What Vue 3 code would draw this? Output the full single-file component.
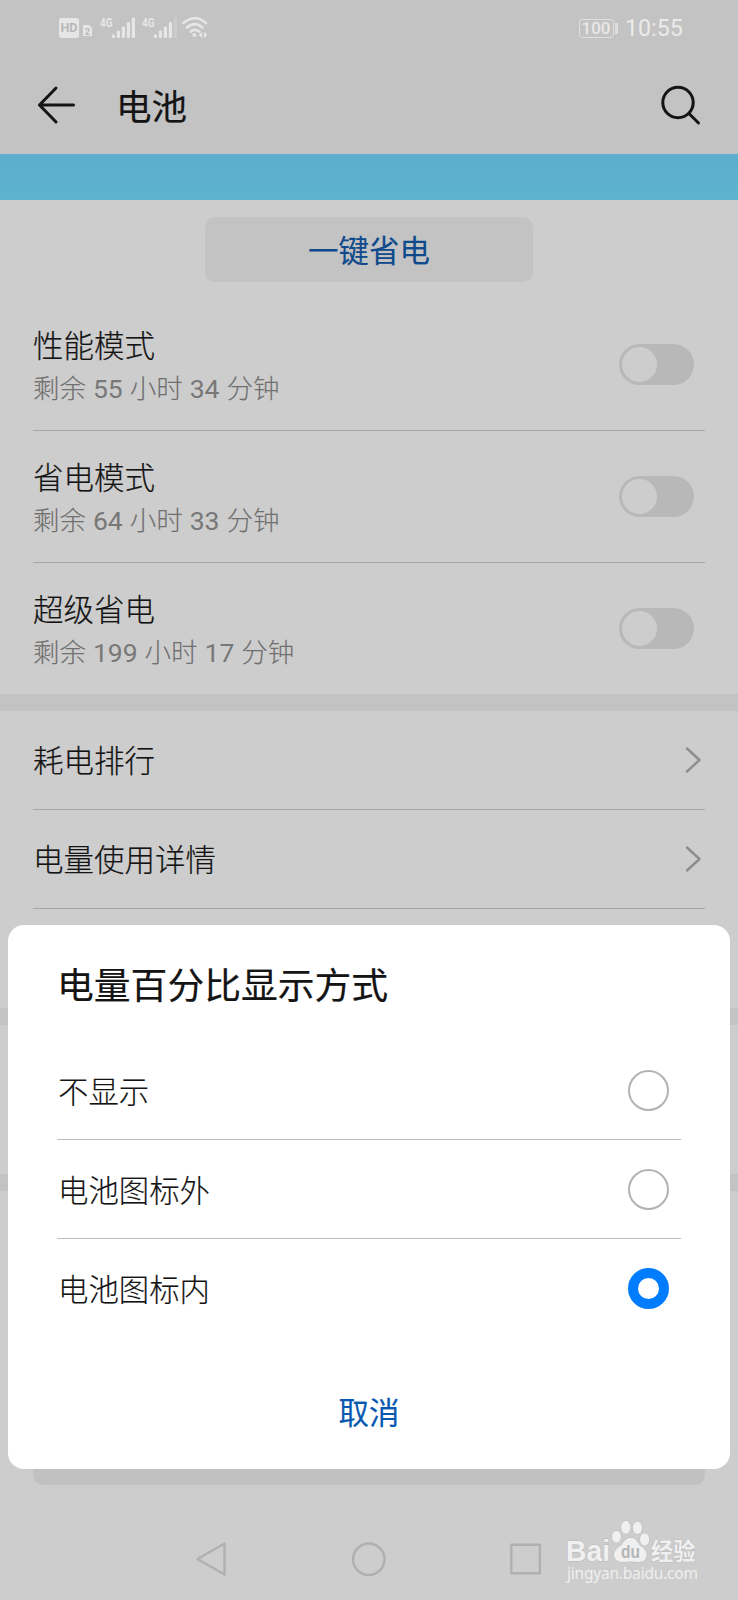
<template>
    <div class="screen">
        <header class="top">
            <div class="status">
                <svg class="status-icons" width="150" height="24" viewBox="0 0 150 24">
                    <rect x="0" y="2" width="20" height="20" rx="2.5" fill="#e6e6e6" />
                    <text x="1.5" y="16.3" textLength="17" lengthAdjust="spacingAndGlyphs" class="hd">HD</text>
                    <path d="M24 9h6l3 3v8h-9z" fill="#e6e6e6" />
                    <text x="28.5" y="18.5" text-anchor="middle" class="sim">2</text>
                    <g v-for="(net, i) in networks" :key="i" :transform="`translate(${net.x} 0)`">
                        <text x="0" y="10.6" textLength="12.5" lengthAdjust="spacingAndGlyphs" class="net">4G</text>
                        <rect v-for="(h, n) in bars" :key="n" :x="11.8 + n * 5" :y="22 - h" width="3.2" :height="h" rx="1.2"
                            fill="#e6e6e6" :opacity="n < net.level ? 1 : 0.25" />
                    </g>
                    <g fill="none" stroke="#e6e6e6" stroke-width="2.6" stroke-linecap="round">
                        <path d="M124.5 7Q136 -2.5 147 7" />
                        <path d="M128 11.6Q136 4.8 143.5 11.6" />
                        <path d="M131.6 15.6Q136 12.2 140.2 15.6" />
                    </g>
                    <circle cx="135.3" cy="19" r="2" fill="#e6e6e6" />
                    <path d="M143.2 16v6l-3.6-3zM145 16v6l3.6-3z" fill="#e6e6e6" />
                </svg>
                <div class="status-right">
                    <div class="battery">100</div>
                    <div class="battery-tip"></div>
                    <span class="clock">10:55</span>
                </div>
            </div>
            <div class="title-bar">
                <svg width="40" height="40" viewBox="0 0 40 40" class="line-icon">
                    <path d="M36.5 20H2.5M19 3L2.5 20L19 37" />
                </svg>
                <h1>电池</h1>
                <svg width="42" height="42" viewBox="0 0 42 42" class="line-icon">
                    <circle cx="19" cy="18.5" r="15.2" />
                    <path d="M30 29.5L39.5 39" />
                </svg>
            </div>
        </header>

        <div class="banner"></div>
        <div class="save-wrap">
            <button class="save-btn">一键省电</button>
        </div>

        <section>
            <div v-for="mode in modes" :key="mode.name" class="row mode">
                <div class="mode-text">
                    <div class="name">{{ mode.name }}</div>
                    <div class="left">剩余 <b>{{ mode.hours }}</b> 小时 <b>{{ mode.minutes }}</b> 分钟</div>
                </div>
                <div class="toggle"></div>
            </div>
        </section>
        <div class="gap"></div>
        <section>
            <div v-for="item in links" :key="item" class="row link">
                <span class="name">{{ item }}</span>
                <svg width="18" height="28" viewBox="0 0 18 28" class="chevron">
                    <path d="M3 2.5L15.5 14L3 25.5" />
                </svg>
            </div>
            <div class="link"></div>
        </section>
        <div class="gap"></div>
        <section class="block"></section>
        <div class="gap"></div>
        <section class="bottom">
            <div class="bottom-btn"></div>
        </section>

        <nav class="nav">
            <svg width="738" height="60" viewBox="0 0 738 60">
                <g fill="none" stroke="#b0b0b0" stroke-width="2.4" stroke-linejoin="round">
                    <path d="M224.5 13.5V44.5L197.5 29z" />
                    <circle cx="368.8" cy="29.2" r="15.7" />
                    <rect x="511.3" y="14.8" width="28.6" height="28.4" />
                </g>
            </svg>
        </nav>

        <div class="dialog">
            <h2>电量百分比显示方式</h2>
            <div v-for="(option, i) in options" :key="option" class="option" @click="selected = i">
                <span>{{ option }}</span>
                <i class="radio" :class="{ checked: selected === i }"></i>
            </div>
            <button class="cancel">取消</button>
        </div>

        <svg class="watermark" width="142" height="76" viewBox="0 0 142 76">
            <g class="mark">
                <text x="5" y="46" textLength="44" lengthAdjust="spacingAndGlyphs" class="bai">Bai</text>
                <ellipse cx="55.4" cy="21.7" rx="4.6" ry="6" />
                <ellipse cx="64.8" cy="12.3" rx="4.6" ry="6.5" />
                <ellipse cx="76.4" cy="12.8" rx="4.6" ry="6.2" />
                <ellipse cx="83.6" cy="24.5" rx="4.6" ry="6.2" />
                <path d="M69.5 22.7C64 22.7 63 28 58 32C53.5 35.5 51.5 39.5 54 43.5C57 48.5 64 46.5 69.5 46.5C75 46.5 82 49 85 43C87 38 84.5 34.5 80.5 31.5C76 28 75.5 22.7 69.5 22.7z" />
                <text x="90" y="44.6" textLength="44.5" lengthAdjust="spacingAndGlyphs" class="jy">经验</text>
            </g>
            <text x="60" y="43" textLength="19" lengthAdjust="spacingAndGlyphs" class="du">du</text>
            <text x="6" y="63.5" textLength="131" class="url">jingyan.baidu.com</text>
        </svg>
    </div>
</template>

<script setup>
import { ref } from 'vue'

const bars = [3.5, 7.5, 11.5, 16, 20.5]
const networks = [
    { x: 41, level: 5 },
    { x: 83, level: 4 }
]

const modes = [
    { name: '性能模式', hours: 55, minutes: 34 },
    { name: '省电模式', hours: 64, minutes: 33 },
    { name: '超级省电', hours: 199, minutes: 17 }
]

const links = ['耗电排行', '电量使用详情']

const options = ['不显示', '电池图标外', '电池图标内']
const selected = ref(2)
</script>

<style>
body {
    margin: 0;
}
</style>

<style scoped>
.screen {
    position: relative;
    width: 738px;
    height: 1600px;
    overflow: hidden;
    background: #cdcdcd;
    color: #141414;
    font-family: Roboto, "Noto Sans CJK SC", sans-serif;
}

.screen * {
    box-sizing: border-box;
}

h1,
h2 {
    margin: 0;
    font-weight: 400;
    -webkit-text-stroke: 0.2px currentColor;
}

button {
    border: none;
    padding: 0;
    font-family: inherit;
    -webkit-text-stroke: 0.15px currentColor;
}

.top {
    height: 154px;
    background: #c3c3c3;
}

.status {
    display: flex;
    justify-content: space-between;
    height: 56px;
    padding: 16px 56px 0 59px;
}

.status-right {
    display: flex;
    align-items: center;
    height: 24px;
}

.hd {
    font: bold 12.5px Roboto, sans-serif;
    fill: #b8b8b8;
}

.sim {
    font: bold 9.5px Roboto, sans-serif;
    fill: #b8b8b8;
}

.net {
    font: bold 12.5px Roboto, sans-serif;
    fill: #e6e6e6;
}

.battery {
    width: 35px;
    height: 19px;
    border: 1.5px solid #dedede;
    border-radius: 3px;
    color: #e8e8e8;
    font-size: 17px;
    font-weight: 500;
    line-height: 17px;
    text-align: center;
}

.battery-tip {
    width: 2.5px;
    height: 11px;
    margin: 0 7.5px 0 1.5px;
    background: #dedede;
}

.clock {
    width: 57px;
    color: #ebebeb;
    font-size: 23.2px;
    line-height: 24px;
}

.title-bar {
    display: flex;
    align-items: center;
    height: 98px;
    padding: 0 37px 0 37px;
}

.title-bar h1 {
    flex: 1;
    margin-left: 39px;
    padding-top: 5px;
    font-size: 35.5px;
    line-height: 50px;
}

.line-icon {
    fill: none;
    stroke: #141414;
    stroke-width: 3;
    stroke-linecap: round;
    stroke-linejoin: round;
}

.banner {
    height: 46px;
    background: linear-gradient(#5dadce, #5cb4ce);
}

.save-wrap {
    display: flex;
    justify-content: center;
    height: 98px;
    padding-top: 17px;
}

.save-btn {
    width: 328px;
    height: 65px;
    padding-bottom: 2px;
    border-radius: 10px;
    background: #c3c3c3;
    color: #0f4a8c;
    font-size: 30.5px;
}

.row {
    display: flex;
    align-items: center;
    justify-content: space-between;
    margin: 0 33px;
    border-bottom: 1px solid #a6a6a6;
}

.mode {
    height: 132px;
}

.mode:first-child {
    height: 133px;
}

.mode:last-child {
    height: 131px;
    border-bottom: none;
}

.mode-text {
    padding-top: 6px;
}

.name {
    font-size: 30.5px;
    font-weight: 300;
    line-height: 44px;
    -webkit-text-stroke: 0.2px currentColor;
}

.left {
    margin-top: -1px;
    color: #707070;
    font-size: 26.5px;
    font-weight: 300;
    line-height: 42px;
    word-spacing: 0.5px;
    -webkit-text-stroke: 0.1px currentColor;
}

.left b {
    color: #787878;
    font-weight: 400;
    -webkit-text-stroke: 0;
}

.toggle {
    width: 75px;
    height: 41px;
    margin-right: 11px;
    padding: 3px;
    border-radius: 21px;
    background: #b8b8b8;
}

.toggle::before {
    content: "";
    display: block;
    width: 35px;
    height: 35px;
    border-radius: 50%;
    background: #cdcdcd;
}

.gap {
    height: 17px;
    background: #c3c3c3;
}

.link {
    height: 99px;
}

.link .name {
    padding-top: 4px;
}

.chevron {
    margin-right: 3px;
    fill: none;
    stroke: #8d8d8d;
    stroke-width: 2.4;
    stroke-linecap: round;
    stroke-linejoin: round;
}

.block {
    height: 149px;
}

.bottom {
    display: flex;
    align-items: flex-end;
    height: 294px;
    padding: 0 33px;
}

.bottom-btn {
    flex: 1;
    height: 66px;
    border-radius: 10px;
    background: #c1c1c1;
}

.nav {
    margin-top: 45px;
}

.nav svg {
    display: block;
}

.dialog {
    position: absolute;
    top: 925px;
    left: 8px;
    width: 722px;
    height: 544px;
    padding: 35px 49px 0;
    border-radius: 16px;
    background: #fff;
}

.dialog h2 {
    height: 81px;
    font-size: 36.8px;
    line-height: 54px;
}

.option {
    display: flex;
    align-items: center;
    justify-content: space-between;
    height: 99px;
    padding: 0 12.5px 0 1px;
    border-bottom: 1px solid #bdbdbd;
    font-size: 30.4px;
    font-weight: 300;
    -webkit-text-stroke: 0.15px currentColor;
}

.option span {
    padding-bottom: 1px;
}

.option:nth-of-type(3) {
    border-bottom: none;
}

.radio {
    width: 41px;
    height: 41px;
    border: 2px solid #b2b2b2;
    border-radius: 50%;
}

.radio.checked {
    border: 10.5px solid #007dff;
}

.cancel {
    display: block;
    width: 100%;
    height: 60px;
    margin-top: 43px;
    background: none;
    color: #0a59b0;
    font-size: 30.5px;
}

.watermark {
    position: absolute;
    left: 561px;
    top: 1515px;
}

.mark {
    fill: #f0f0f0;
    stroke: #b9b9b9;
    stroke-width: 1;
    paint-order: stroke;
}

.bai {
    font: bold 29.5px "Liberation Sans", sans-serif;
}

.jy {
    font: bold 23.5px "Noto Sans CJK SC", sans-serif;
}

.du {
    font: bold 19px "Liberation Sans", sans-serif;
    fill: #b5b5b5;
}

.url {
    font: 15.5px "Noto Sans", sans-serif;
    fill: #efefef;
}
</style>
